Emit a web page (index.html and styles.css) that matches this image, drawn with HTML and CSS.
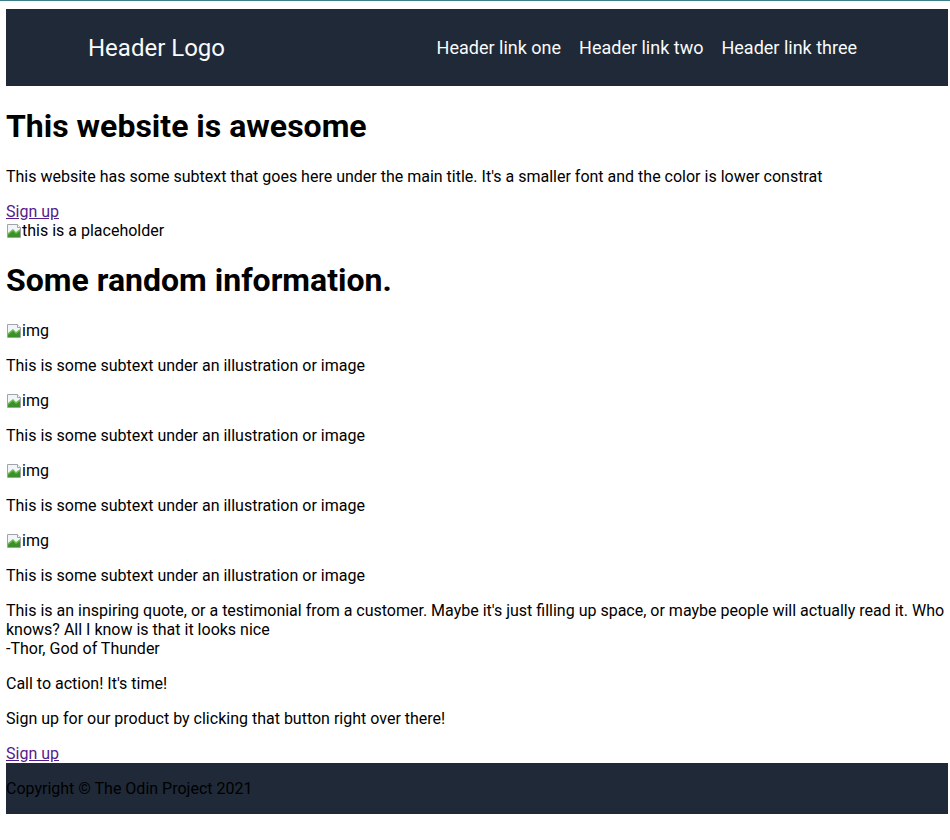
FILE: index.html
```html
<!DOCTYPE html>
<html lang="en">
<head>
<meta charset="utf-8">
<title>Landing page</title>
<link rel="stylesheet" href="styles.css">
</head>
<body>
<header class="site-header">
  <div class="logo">Header Logo</div>
  <nav class="nav">
    <a class="nav-link">Header link one</a>
    <a class="nav-link">Header link two</a>
    <a class="nav-link">Header link three</a>
  </nav>
</header>

<section class="hero">
  <h1 class="title">This website is awesome</h1>
  <p class="text">This website has some subtext that goes here under the main title. It's a smaller font and the color is lower constrat</p>
  <div class="link-row"><a class="link" href="#">Sign up</a></div>
  <div class="hero-pic"><svg class="broken-icon" width="16" height="16" viewBox="0 0 16 16"><path d="M1.5 1.5h10l3 3v10h-13z" fill="#f1f5f9" stroke="#a0a4a8"/><path d="M2 14V10l5-4 3 3 4-3v8z" fill="#6abf4b"/><path d="M2 14V12l5-4 3 3 4-3v6z" fill="#3c8f2a"/><path d="M11.5 1.5v3h3" fill="#fff" stroke="#a0a4a8"/></svg>this is a placeholder</div>
</section>

<section class="info">
  <h1 class="title">Some random information.</h1>
  <div class="card">
    <p class="pic-row"><svg class="broken-icon" width="16" height="16" viewBox="0 0 16 16"><path d="M1.5 1.5h10l3 3v10h-13z" fill="#f1f5f9" stroke="#a0a4a8"/><path d="M2 14V10l5-4 3 3 4-3v8z" fill="#6abf4b"/><path d="M2 14V12l5-4 3 3 4-3v6z" fill="#3c8f2a"/><path d="M11.5 1.5v3h3" fill="#fff" stroke="#a0a4a8"/></svg>img</p>
    <p class="text">This is some subtext under an illustration or image</p>
  </div>
  <div class="card">
    <p class="pic-row"><svg class="broken-icon" width="16" height="16" viewBox="0 0 16 16"><path d="M1.5 1.5h10l3 3v10h-13z" fill="#f1f5f9" stroke="#a0a4a8"/><path d="M2 14V10l5-4 3 3 4-3v8z" fill="#6abf4b"/><path d="M2 14V12l5-4 3 3 4-3v6z" fill="#3c8f2a"/><path d="M11.5 1.5v3h3" fill="#fff" stroke="#a0a4a8"/></svg>img</p>
    <p class="text">This is some subtext under an illustration or image</p>
  </div>
  <div class="card">
    <p class="pic-row"><svg class="broken-icon" width="16" height="16" viewBox="0 0 16 16"><path d="M1.5 1.5h10l3 3v10h-13z" fill="#f1f5f9" stroke="#a0a4a8"/><path d="M2 14V10l5-4 3 3 4-3v8z" fill="#6abf4b"/><path d="M2 14V12l5-4 3 3 4-3v6z" fill="#3c8f2a"/><path d="M11.5 1.5v3h3" fill="#fff" stroke="#a0a4a8"/></svg>img</p>
    <p class="text">This is some subtext under an illustration or image</p>
  </div>
  <div class="card">
    <p class="pic-row"><svg class="broken-icon" width="16" height="16" viewBox="0 0 16 16"><path d="M1.5 1.5h10l3 3v10h-13z" fill="#f1f5f9" stroke="#a0a4a8"/><path d="M2 14V10l5-4 3 3 4-3v8z" fill="#6abf4b"/><path d="M2 14V12l5-4 3 3 4-3v6z" fill="#3c8f2a"/><path d="M11.5 1.5v3h3" fill="#fff" stroke="#a0a4a8"/></svg>img</p>
    <p class="text">This is some subtext under an illustration or image</p>
  </div>
</section>

<section class="quote">
  <p class="text">This is an inspiring quote, or a testimonial from a customer. Maybe it's just filling up space, or maybe people will actually read it. Who knows? All I know is that it looks nice<br>-Thor, God of Thunder</p>
</section>

<section class="cta">
  <p class="text">Call to action! It's time!</p>
  <p class="text">Sign up for our product by clicking that button right over there!</p>
  <div class="link-row"><a class="link" href="#">Sign up</a></div>
</section>

<footer class="site-footer">
  <p class="text">Copyright © The Odin Project 2021</p>
</footer>
</body>
</html>
```

FILE: styles.css
```css
html {
  border-top: 1px solid #3b7f87;
}

body {
  margin: 8px 2px 0 6px;
  font-family: Roboto, "Liberation Sans", sans-serif;
  font-size: 16px;
  color: #000;
  background: #fff;
}

.site-header {
  height: 77px;
  background: #1f2937;
  color: #f9fafb;
  display: flex;
  align-items: center;
  justify-content: space-between;
  padding: 0 91px 0 82px;
}

.logo {
  font-size: 24px;
}

.nav {
  display: flex;
  gap: 18px;
  font-size: 18px;
}

.nav-link {
  color: #f9fafb;
}

.title {
  font-size: 32px;
  font-weight: 700;
  margin: 21.44px 0;
}

.text {
  margin: 16px 0;
}

.link {
  color: #551a8b;
  text-decoration: underline;
}

.pic-row {
  margin: 16px 0;
  height: 19px;
}

.broken-icon {
  vertical-align: -3px;
}

.site-footer {
  background: #1f2937;
  color: #000;
  display: flow-root;
}
```
